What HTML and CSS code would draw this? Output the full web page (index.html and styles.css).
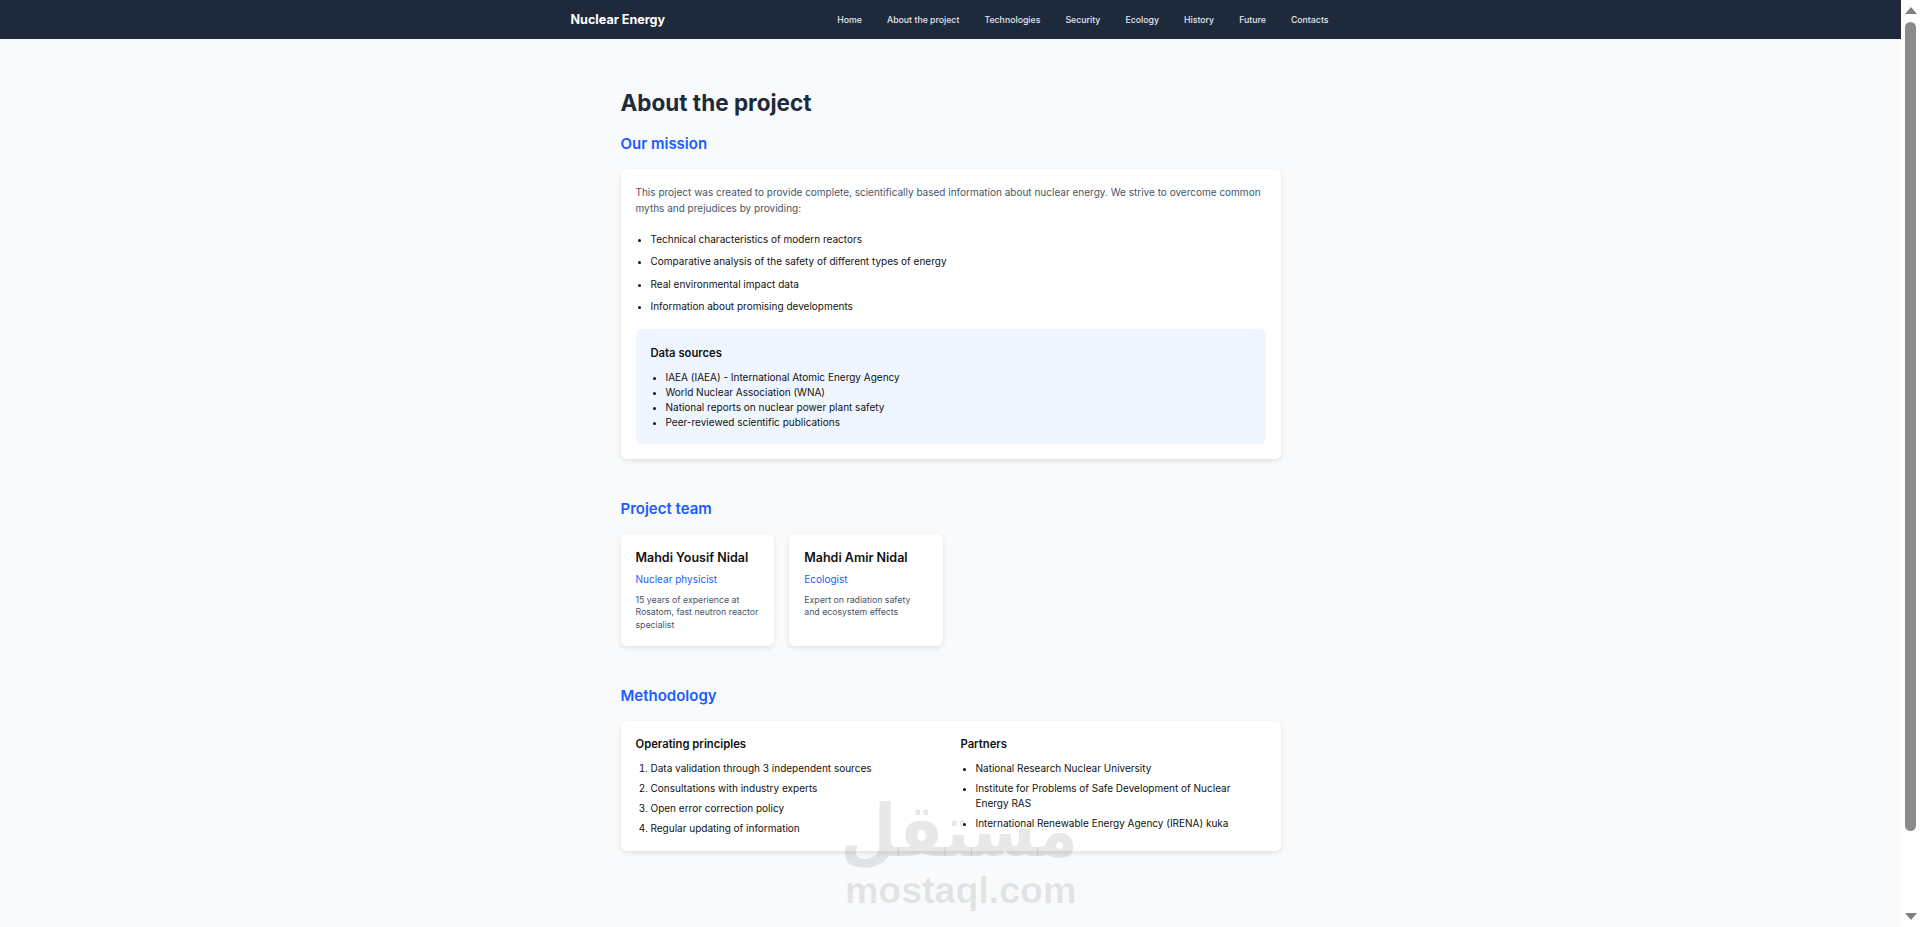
FILE: index.html
```html
<!DOCTYPE html>
<html lang="en">
<head>
    <meta charset="UTF-8">
    <meta name="viewport" content="width=device-width, initial-scale=1.0">
    <title>About the project - Nuclear Energy</title>
    <link rel="stylesheet" href="styles.css">
</head>
<body>
    <div class="page">
        <nav class="navbar">
            <div class="nav-inner">
                <a class="logo" href="#">Nuclear Energy</a>
                <ul class="nav-links">
                    <li><a href="#">Home</a></li>
                    <li><a href="#">About the project</a></li>
                    <li><a href="#">Technologies</a></li>
                    <li><a href="#">Security</a></li>
                    <li><a href="#">Ecology</a></li>
                    <li><a href="#">History</a></li>
                    <li><a href="#">Future</a></li>
                    <li><a href="#">Contacts</a></li>
                </ul>
            </div>
        </nav>

        <main class="container">
            <h1>About the project</h1>

            <section class="section">
                <h2>Our mission</h2>
                <div class="card">
                    <p class="intro">This project was created to provide complete, scientifically based information about nuclear energy. We strive to overcome common myths and prejudices by providing:</p>
                    <ul class="mission-list">
                        <li>Technical characteristics of modern reactors</li>
                        <li>Comparative analysis of the safety of different types of energy</li>
                        <li>Real environmental impact data</li>
                        <li>Information about promising developments</li>
                    </ul>
                    <div class="sources">
                        <h3>Data sources</h3>
                        <ul>
                            <li>IAEA (IAEA) - International Atomic Energy Agency</li>
                            <li>World Nuclear Association (WNA)</li>
                            <li>National reports on nuclear power plant safety</li>
                            <li>Peer-reviewed scientific publications</li>
                        </ul>
                    </div>
                </div>
            </section>

            <section class="section">
                <h2>Project team</h2>
                <div class="team-grid">
                    <div class="card member">
                        <h3>Mahdi Yousif Nidal</h3>
                        <div class="role">Nuclear physicist</div>
                        <p>15 years of experience at Rosatom, fast neutron reactor specialist</p>
                    </div>
                    <div class="card member">
                        <h3>Mahdi Amir Nidal</h3>
                        <div class="role">Ecologist</div>
                        <p>Expert on radiation safety and ecosystem effects</p>
                    </div>
                </div>
            </section>

            <section class="section">
                <h2>Methodology</h2>
                <div class="card method-grid">
                    <div>
                        <h3>Operating principles</h3>
                        <ol>
                            <li>Data validation through 3 independent sources</li>
                            <li>Consultations with industry experts</li>
                            <li>Open error correction policy</li>
                            <li>Regular updating of information</li>
                        </ol>
                    </div>
                    <div>
                        <h3>Partners</h3>
                        <ul>
                            <li>National Research Nuclear University</li>
                            <li>Institute for Problems of Safe Development of Nuclear Energy RAS</li>
                            <li>International Renewable Energy Agency (IRENA) kuka</li>
                        </ul>
                    </div>
                </div>
            </section>
        </main>
    </div>

    <div class="scrollbar">
        <span class="arrow-up"></span>
        <div class="track"><div class="thumb"></div></div>
        <span class="arrow-down"></span>
    </div>

    <div class="watermark">
        <div class="wm-arabic" lang="ar" dir="rtl">مستقل</div>
        <div class="wm-latin">mostaql.com</div>
    </div>
</body>
</html>
```

FILE: styles.css
```css
* {
    box-sizing: border-box;
}

html, body {
    height: 100%;
}

body {
    margin: 0;
    display: flex;
    overflow: hidden;
    font-family: 'Inter', 'Liberation Sans', sans-serif;
    background: #f8fafc;
    color: #111;
}

a {
    color: inherit;
    text-decoration: none;
}

.page {
    flex: 1;
    min-width: 0;
}

/* top bar */
.navbar {
    height: 39px;
    background: #1e293b;
    color: #fff;
}

.nav-inner {
    width: 760px;
    height: 100%;
    margin: 0 auto;
    display: flex;
    align-items: center;
    justify-content: space-between;
}

.logo {
    font-size: 12.6px;
    font-weight: 700;
}

.nav-links {
    list-style: none;
    display: flex;
    gap: 25px;
    margin: 0;
    padding: 1px 2px 0 0;
    font-size: 8.75px;
    font-weight: 500;
    color: #e2e8f0;
}

/* main column */
.container {
    width: 660px;
    margin: 0 auto;
    padding-top: 49px;
}

h1 {
    margin: 0 0 17px;
    font-size: 22.5px;
    line-height: 29px;
    font-weight: 700;
    color: #1e293b;
}

.section {
    margin-bottom: 40px;
}

h2 {
    margin: 0 0 15px;
    font-size: 15px;
    line-height: 20px;
    font-weight: 600;
    color: #1a5cff;
}

h3 {
    margin: 0;
    font-weight: 600;
}

.card {
    background: #fff;
    border-radius: 6px;
    padding: 15px;
    box-shadow: 0 2px 5px rgba(0, 0, 0, 0.1);
}

.intro {
    margin: 0 0 14.5px;
    font-size: 10px;
    line-height: 16px;
    color: #475569;
}

.mission-list {
    margin: 0 0 14.5px;
    padding-left: 15px;
    font-size: 10px;
    line-height: 16px;
}

.mission-list li {
    margin-bottom: 6.5px;
}

.sources {
    background: #eff6ff;
    border-radius: 6px;
    padding: 16px 15px 14px;
}

.sources h3 {
    margin-bottom: 9px;
    font-size: 11.25px;
    line-height: 16px;
}

.sources ul {
    margin: 0;
    padding-left: 15px;
    font-size: 10px;
    line-height: 15px;
}

.team-grid {
    display: grid;
    grid-template-columns: repeat(4, 1fr);
    gap: 15px;
}

.member h3 {
    font-size: 12.5px;
    line-height: 18px;
    margin-bottom: 4px;
}

.role {
    font-size: 10px;
    line-height: 16px;
    color: #1a5cff;
    margin-bottom: 7px;
}

.member p {
    margin: 0;
    font-size: 8.75px;
    line-height: 12.5px;
    color: #475569;
}

.method-grid {
    display: grid;
    grid-template-columns: 1fr 1fr;
    gap: 20px;
}

.method-grid h3 {
    margin-bottom: 9px;
    font-size: 11.25px;
    line-height: 16px;
}

.method-grid ol,
.method-grid ul {
    margin: 0;
    padding-left: 15px;
    font-size: 10px;
    line-height: 15px;
}

.method-grid li {
    margin-bottom: 5px;
}

.method-grid li:last-child {
    margin-bottom: 0;
}

/* classic scrollbar, drawn since the page itself doesn't scroll */
.scrollbar {
    width: 19px;
    flex-shrink: 0;
    display: flex;
    flex-direction: column;
    align-items: center;
    background: #fdfdfd;
    padding: 7px 0;
}

.arrow-up,
.arrow-down {
    width: 0;
    height: 0;
    border-left: 6.5px solid transparent;
    border-right: 6.5px solid transparent;
}

.arrow-up {
    border-bottom: 7px solid #808080;
}

.arrow-down {
    border-top: 7px solid #808080;
}

.track {
    flex: 1;
    width: 11px;
    padding: 8px 0 82px;
}

.thumb {
    height: 100%;
    background: #8a8a8a;
    border-radius: 6px;
}

/* site watermark over the screenshot */
.watermark {
    position: absolute;
    left: 845px;
    top: 790px;
    width: 229px;
    text-align: center;
    color: rgba(0, 0, 0, 0.09);
    pointer-events: none;
}

.wm-arabic {
    font-family: 'DejaVu Sans', sans-serif;
    font-weight: 700;
    font-size: 65px;
    line-height: 82px;
    transform: translateX(4px) scaleY(1.12);
}

.wm-latin {
    font-family: 'Liberation Sans', sans-serif;
    font-weight: 700;
    font-size: 37.5px;
    line-height: 36px;
}
```
